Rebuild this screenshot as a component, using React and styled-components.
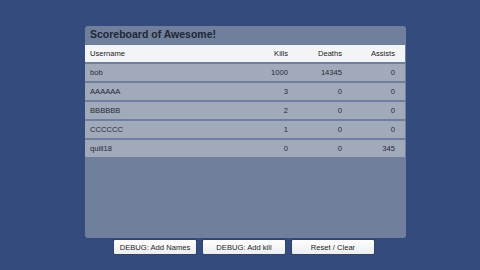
import React from "react";
import styled, { createGlobalStyle } from "styled-components";

const Global = createGlobalStyle`
  html, body { margin: 0; padding: 0; background: #344c7d; }
  body { font-family: "Liberation Sans", Arial, sans-serif; }
`;

const Screen = styled.div`
  width: 480px;
  height: 270px;
  background: #344c7d;
  padding: 26px 0 0 85px;
  box-sizing: border-box;
`;

const Column = styled.div`
  width: 321px;
  display: flex;
  flex-direction: column;
  gap: 1px;
`;

const Panel = styled.div`
  height: 212px;
  background: #707f9b;
  border-radius: 3px;
  display: flex;
  flex-direction: column;
  gap: 2px;
  overflow: hidden;
`;

const Title = styled.div`
  height: 17px;
  line-height: 17px;
  padding-left: 5px;
  font-weight: bold;
  font-size: 10.5px;
  color: #1e2738;
`;

const Row = styled.div`
  display: grid;
  grid-template-columns: 1fr 54px 54px 53px;
  align-items: center;
  height: 17px;
  margin-right: 1px;
  padding: 0 10px 0 5px;
  font-size: 7.6px;
  color: ${(p) => (p.$header ? "#1a1a1a" : "#262b36")};
  background: ${(p) => (p.$header ? "#f3f4f6" : "#a1aabb")};
`;

const Cell = styled.span`
  text-align: ${(p) => (p.$left ? "left" : "right")};
  white-space: nowrap;
`;

const Buttons = styled.div`
  display: flex;
  justify-content: center;
  gap: 5px;
  padding-right: 3px;
`;

const Button = styled.button`
  width: 84px;
  height: 16px;
  padding: 0;
  border: 1px solid #2e4370;
  border-radius: 2px;
  background: linear-gradient(#fdfdfd, #eceef1);
  font-family: "Liberation Sans", Arial, sans-serif;
  font-size: 7.6px;
  color: #1f1f1f;
`;

const players = [
  ["bob", 1000, 14345, 0],
  ["AAAAAA", 3, 0, 0],
  ["BBBBBB", 2, 0, 0],
  ["CCCCCC", 1, 0, 0],
  ["quill18", 0, 0, 345],
];

export default function App() {
  return (
    <>
      <Global />
      <Screen>
        <Column>
          <Panel>
            <Title>Scoreboard of Awesome!</Title>
            <Row $header>
              <Cell $left>Username</Cell>
              <Cell>Kills</Cell>
              <Cell>Deaths</Cell>
              <Cell>Assists</Cell>
            </Row>
            {players.map(([n, k, d, a]) => (
              <Row key={n}>
                <Cell $left>{n}</Cell>
                <Cell>{k}</Cell>
                <Cell>{d}</Cell>
                <Cell>{a}</Cell>
              </Row>
            ))}
          </Panel>
          <Buttons>
            <Button>DEBUG: Add Names</Button>
            <Button>DEBUG: Add kill</Button>
            <Button>Reset / Clear</Button>
          </Buttons>
        </Column>
      </Screen>
    </>
  );
}
